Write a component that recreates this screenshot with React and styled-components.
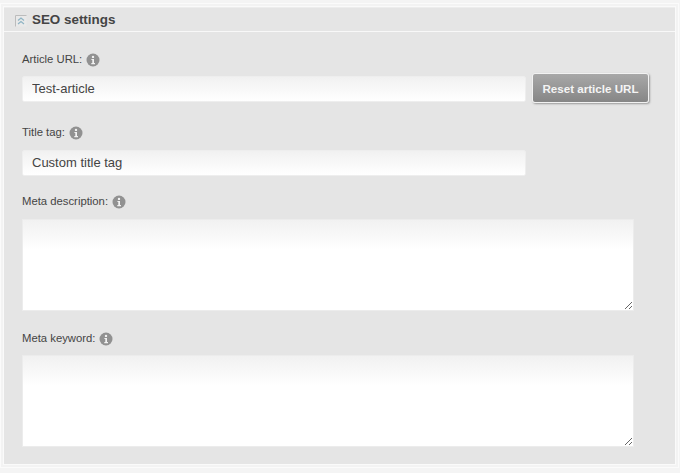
import React from "react";
import styled, { createGlobalStyle } from "styled-components";

const GlobalStyle = createGlobalStyle`
  html, body {
    margin: 0;
    padding: 0;
    background: #f4f4f4;
    font-family: "Liberation Sans", Arial, sans-serif;
  }
`;

function InfoIcon() {
  return (
    <InfoSvg viewBox="0 0 14 14" aria-hidden="true">
      <circle cx="7" cy="7" r="6.5" fill="#919191" />
      <circle cx="7" cy="3.9" r="1.2" fill="#f2f2f2" />
      <path d="M5.4 5.9h2.6v4.2h1v1.1H5.3v-1.1h1V7H5.4z" fill="#f2f2f2" />
    </InfoSvg>
  );
}

function CollapseIcon() {
  return (
    <CollapseSvg viewBox="0 0 12 12" aria-hidden="true">
      <rect x="0.5" y="0.5" width="11" height="11" fill="#e9e9e9" />
      <path d="M0.5 11.5V0.5H11.5" fill="none" stroke="#bcbcbc" />
      <path d="M3 5.5l3-2.5 3 2.5M3 9l3-2.5L9 9" fill="none" stroke="#8fb4c4" strokeWidth="1.2" />
    </CollapseSvg>
  );
}

function Field({ label, labelGap, after, children }) {
  return (
    <FieldWrapper $after={after}>
      <Label $gap={labelGap}>
        {label}
        <InfoIcon />
      </Label>
      {children}
    </FieldWrapper>
  );
}

export default function App() {
  return (
    <>
      <GlobalStyle />
      <Page>
        <Panel>
          <Header>
            <CollapseIcon />
            <Title>SEO settings</Title>
          </Header>
          <Body>
            <Field label="Article URL:" labelGap={9} after={22}>
              <InputRow>
                <TextInput defaultValue="Test-article" />
                <ResetButton type="button">Reset article URL</ResetButton>
              </InputRow>
            </Field>
            <Field label="Title tag:" labelGap={10} after={17}>
              <InputRow>
                <TextInput defaultValue="Custom title tag" />
              </InputRow>
            </Field>
            <Field label="Meta description:" labelGap={10} after={19}>
              <TextArea />
            </Field>
            <Field label="Meta keyword:" labelGap={9} after={0}>
              <TextArea />
            </Field>
          </Body>
        </Panel>
      </Page>
    </>
  );
}

const Page = styled.div`
  width: 680px;
  height: 473px;
  padding: 7px 5px 9px 4px;
  box-sizing: border-box;
  overflow: hidden;
`;

const Panel = styled.section`
  height: 100%;
  box-sizing: border-box;
  background: #e5e5e5;
  border-top: 1px solid #ededed;
  box-shadow: 0 0 0 1px #fafafa, 0 0 0 3px #f3f3f3, 0 0 0 4px #fbfbfb;
`;

const Header = styled.header`
  height: 23px;
  box-sizing: content-box;
  display: flex;
  align-items: center;
  padding-left: 11px;
  border-bottom: 1px solid #f8f8f8;
`;

const CollapseSvg = styled.svg`
  width: 12px;
  height: 12px;
  margin: 2px 5px 0 0;
`;

const Title = styled.h2`
  margin: 0 0 1px;
  font-size: 13.4px;
  font-weight: bold;
  color: #444;
`;

const Body = styled.div`
  padding: 19px 0 0 18px;
  display: flex;
  flex-direction: column;
`;

const FieldWrapper = styled.div`
  margin-bottom: ${(p) => p.$after}px;
`;

const Label = styled.label`
  display: flex;
  align-items: center;
  gap: 4px;
  height: 16px;
  margin-bottom: ${(p) => p.$gap}px;
  font-size: 11.3px;
  color: #444;
`;

const InfoSvg = styled.svg`
  width: 14px;
  height: 14px;
  margin-top: 2px;
`;

const InputRow = styled.div`
  display: flex;
  align-items: flex-end;
  gap: 6px;
  height: 26px;
`;

const TextInput = styled.input`
  width: 504px;
  height: 26px;
  box-sizing: border-box;
  padding: 0 9px 1px;
  border: 1px solid #eeeeee;
  border-radius: 2px;
  outline: none;
  background: linear-gradient(#f1f1f1, #ffffff);
  font-family: inherit;
  font-size: 13px;
  color: #444;
`;

const ResetButton = styled.button`
  flex: none;
  width: 117px;
  height: 30px;
  margin-bottom: -1px;
  padding: 0;
  border: 1px solid #f2f2f2;
  border-radius: 3px;
  background: linear-gradient(#a8a8a8, #868686);
  box-shadow: 1px 1px 2px #9a9a9a;
  font-family: inherit;
  font-size: 11.6px;
  font-weight: bold;
  color: #f4f4f4;
`;

const TextArea = styled.textarea`
  display: block;
  width: 612px;
  height: 92px;
  box-sizing: border-box;
  border: 1px solid #ececec;
  outline: none;
  background: linear-gradient(#f1f1f1, #ffffff 33%);
`;
